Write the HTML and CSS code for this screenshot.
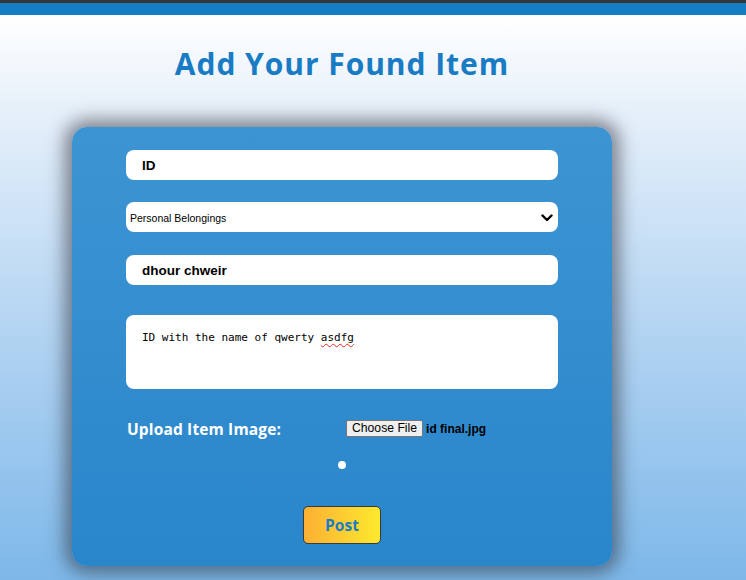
FILE: index.html
```html
<!DOCTYPE html>
<html>
<head>
<meta charset="utf-8">
<link rel="stylesheet" href="styles.css">
</head>
<body>
<header class="topbar"></header>
<main class="page">
  <h1 class="title">Add Your Found Item</h1>
  <form class="card">
    <input class="field" type="text" value="ID">
    <div class="select">
      <span>Personal Belongings</span>
      <svg class="chev" width="12" height="8" viewBox="0 0 12 8"><path d="M1.5 1.5 L6 6 L10.5 1.5" fill="none" stroke="#000" stroke-width="2.4" stroke-linecap="round" stroke-linejoin="round"/></svg>
    </div>
    <input class="field name" type="text" value="dhour chweir">
    <div class="area">ID with the name of qwerty <span class="spell">asdfg</span></div>
    <div class="upload">
      <label class="upload-label">Upload Item Image:</label>
      <div class="file">
        <span class="file-btn">Choose File</span>
        <span class="file-name">id final.jpg</span>
      </div>
    </div>
    <div class="dotrow"><span class="dot"></span></div>
    <div class="actions"><button type="button" class="post">Post</button></div>
  </form>
</main>
</body>
</html>
```
FILE: styles.css
```css
html, body {
  margin: 0;
  padding: 0;
}
body {
  height: 580px;
  overflow: hidden;
  background: linear-gradient(to bottom, #ffffff 15px, #e6f0fa 110px, #b3d4f2 330px, #7db8e9 580px);
  font-family: "Liberation Sans", Arial, sans-serif;
}
.topbar {
  height: 12px;
  border-top: 3px solid #363636;
  background: #157dc3;
}
.page {
  width: 684px;
  display: flex;
  flex-direction: column;
  align-items: center;
}
.title {
  margin: 31px 0 0;
  height: 81px;
  font-family: "Open Sans", sans-serif;
  font-weight: 700;
  font-size: 30px;
  line-height: 36px;
  color: #187bc4;
  letter-spacing: 0.95px;
}
.card {
  width: 540px;
  box-sizing: border-box;
  padding: 23px 54px 22px;
  border-radius: 15px;
  background: linear-gradient(to bottom, #3d94d2, #2986cb);
  box-shadow: 0 0 18px 7px rgba(40, 40, 50, 0.55);
  display: flex;
  flex-direction: column;
}
.field {
  display: block;
  width: 432px;
  height: 30px;
  box-sizing: border-box;
  border: none;
  border-radius: 8px;
  background: #fff;
  padding: 0 16px;
  font-family: "Liberation Sans", Arial, sans-serif;
  font-weight: 700;
  font-size: 13.5px;
  color: #000;
  outline: none;
}
.select {
  margin-top: 22px;
  width: 432px;
  height: 30px;
  box-sizing: border-box;
  border-radius: 8px;
  background: #fff;
  padding: 0 4px 0 4px;
  display: flex;
  align-items: center;
  justify-content: space-between;
  font-size: 10.5px;
  color: #000;
}
.select span { padding-top: 2px; }
.chev { margin-right: 1px; margin-top: 1px; }
.name { margin-top: 23px; }
.area {
  margin-top: 30px;
  width: 432px;
  height: 74px;
  box-sizing: border-box;
  border-radius: 8px;
  background: #fff;
  padding: 15px 16px 14px;
  font-family: "DejaVu Sans Mono", monospace;
  font-size: 11px;
  line-height: 16px;
  color: #000;
}
.spell {
  text-decoration: underline wavy #e03030;
  text-decoration-thickness: 1px;
  text-underline-offset: 2px;
}
.upload {
  margin-top: 31px;
  height: 18px;
  display: flex;
  align-items: center;
}
.upload-label {
  width: 220px;
  padding-left: 1px;
  font-family: "Open Sans", sans-serif;
  font-weight: 700;
  font-size: 15.5px;
  letter-spacing: 0.15px;
  color: #fff;
}
.file {
  display: flex;
  align-items: center;
  gap: 3px;
  margin-top: -1px;
  margin-left: -1px;
}
.file-btn {
  box-sizing: border-box;
  height: 17px;
  padding: 0 5px;
  border: 1px solid #767676;
  border-radius: 2px;
  background: #efefef;
  font-size: 12.2px;
  line-height: 15px;
  color: #000;
}
.file-name {
  font-weight: 700;
  font-size: 12px;
  color: #000;
}
.dotrow {
  margin-top: 23px;
  height: 8px;
  display: flex;
  justify-content: center;
}
.dot {
  width: 8px;
  height: 8px;
  border-radius: 50%;
  background: #fff;
}
.actions {
  margin-top: 37px;
  display: flex;
  justify-content: center;
}
.post {
  width: 78px;
  height: 38px;
  border: 1px solid #3a3a3a;
  border-radius: 5px;
  background: linear-gradient(to right, #fcb034, #fde92e);
  font-family: "Open Sans", sans-serif;
  font-weight: 700;
  font-size: 15.5px;
  color: #1a7dc6;
  padding: 0;
}
```
